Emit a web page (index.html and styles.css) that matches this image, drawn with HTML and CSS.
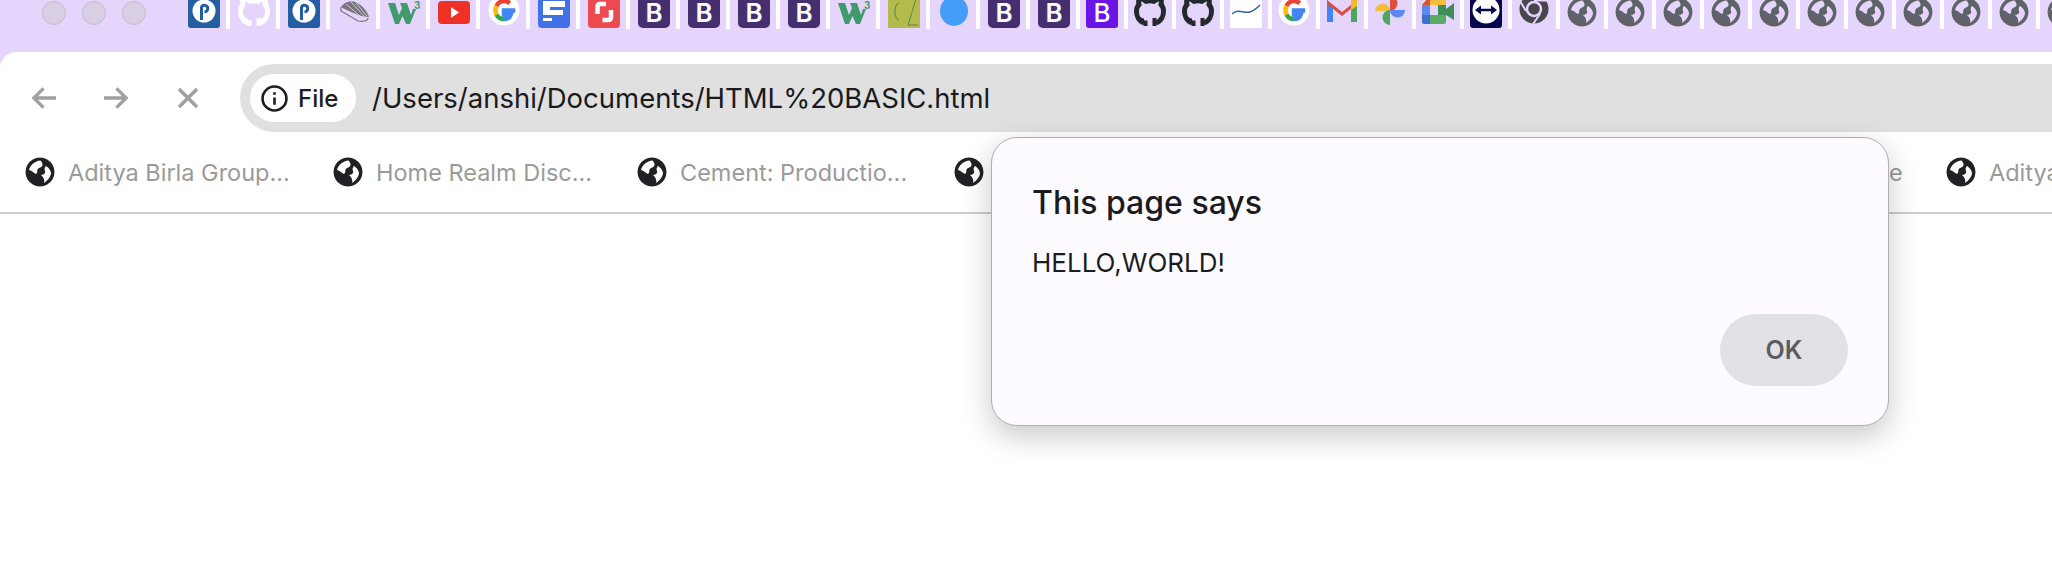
FILE: index.html
```html
<!DOCTYPE html>
<html lang="en">
<head>
<meta charset="utf-8">
<title>HTML BASIC</title>
<link rel="stylesheet" href="styles.css">
</head>
<body>
<svg class="defs" width="0" height="0" aria-hidden="true">
  <defs>
    <symbol id="i-p" viewBox="0 0 32 32">
      <rect width="32" height="32" rx="3" fill="#235ea3"/>
      <circle cx="16" cy="15" r="11.5" fill="#fff"/>
      <path d="M13.5 24V11.5a3.2 3.2 0 1 1 3 4.2" fill="none" stroke="#235ea3" stroke-width="3"/>
    </symbol>
    <symbol id="i-gh" viewBox="0 0 32 32">
      <path d="M10 27C4.5 25 2.5 19.5 2.5 15.5C2.5 12 3.8 9.8 5 8.5C4.5 6.5 4.7 3.8 5.5 2.5C7.5 2.5 10 3.8 12 5.3Q16 4.3 20 5.3C22 3.8 24.5 2.5 26.5 2.5C27.3 3.8 27.5 6.5 27 8.5C28.2 9.8 29.5 12 29.5 15.5C29.5 19.5 27.5 25 22 27" fill="none" stroke="currentColor" stroke-width="5"/>
      <path d="M11.5 30V24.5M20.5 30V22" stroke="currentColor" stroke-width="4"/>
      <path d="M3 20C5 22 8 24 10 24" fill="none" stroke="currentColor" stroke-width="3"/>
    </symbol>
    <symbol id="i-sushi" viewBox="0 0 32 32">
      <path d="M3 11C6 6 14 4 19 7C25 10 29 15 31 21C24 21 14 17 3 11Z" fill="#77777b"/>
      <path d="M8 8L22 20M13 6L26 20M18 7L29 20" stroke="#e5d4fb" stroke-width=".8"/>
      <path d="M3 11V15L20 25C24 26 30 25 30 22" fill="none" stroke="#77777b" stroke-width="1.2"/>
    </symbol>
    <symbol id="i-w3" viewBox="0 0 32 32">
      <path d="M0 7H7L11 19L14 12L12 7H19L23 19L25 13L28 13L22 28H18L14.5 20L11 28H7Z" fill="#419a6c"/>
      <text x="26" y="13" class="w3-num">3</text>
    </symbol>
    <symbol id="i-yt" viewBox="0 0 32 32">
      <rect y="5" width="32" height="23" rx="4" fill="#ee3124"/>
      <path d="M13 11L21 16.5L13 22Z" fill="#fff"/>
    </symbol>
    <symbol id="i-g" viewBox="0 0 32 32">
      <circle cx="16" cy="14" r="15.5" fill="#fff"/>
      <g transform="translate(16 14) scale(1.12) translate(-16.5 -14)" fill="none" stroke-width="4">
        <path d="M26.5 14.5H16.5V18H22.5C21.7 20.5 19.3 22 16.5 22" stroke="#4285f4"/>
        <path d="M16.5 22C13.5 22 11 20.5 9.8 18" stroke="#34a853"/>
        <path d="M9.8 18C8.8 16 8.8 12.5 9.8 10.5" stroke="#fbbc05"/>
        <path d="M9.8 10.5C11 8 13.5 6 16.5 6C18.5 6 20.3 6.8 21.7 8" stroke="#ea4335"/>
      </g>
    </symbol>
    <symbol id="i-f" viewBox="0 0 32 32">
      <rect width="32" height="32" rx="4" fill="#4270e6"/>
      <path d="M5 5H27V11H12V14H25V19H5ZM5 22H14V25H5Z" fill="#fff"/>
    </symbol>
    <symbol id="i-red" viewBox="0 0 32 32">
      <rect width="32" height="32" rx="4" fill="#ec4a4e"/>
      <path d="M9.5 18V11Q9.5 8 12.5 8H18M23 14V21Q23 24 20 24H14.5" fill="none" stroke="#fff" stroke-width="4.5"/>
    </symbol>
    <symbol id="i-b" viewBox="0 0 32 32">
      <rect width="32" height="32" rx="5" fill="#452f6e"/>
      <text x="16" y="25.5" class="b-letter">B</text>
    </symbol>
    <symbol id="i-b2" viewBox="0 0 32 32">
      <rect width="32" height="32" rx="3" fill="#6a14e6"/>
      <text x="16" y="25.5" class="b-letter b-thin">B</text>
    </symbol>
    <symbol id="i-cz" viewBox="0 0 32 32">
      <rect width="32" height="32" fill="#b4bb4c"/>
      <path d="M11 7C6 8 5 22 11 24M21 3H28L20 29H30" fill="none" stroke="#4c8a56" stroke-width="1"/>
    </symbol>
    <symbol id="i-line" viewBox="0 0 32 32">
      <rect width="32" height="32" fill="#fff"/>
      <path d="M2 18C8 12 14 18 20 16C24 15 27 12 30 9" fill="none" stroke="#2c64a8" stroke-width="1.5"/>
    </symbol>
    <symbol id="i-gmail" viewBox="0 0 32 32">
      <path d="M1 4V26H7V10Z" fill="#4285f4"/>
      <path d="M31 4V26H25V10Z" fill="#4fa55e"/>
      <path d="M1 4L16 16L31 4L31 8L16 20L1 8Z" fill="#dd4e3c"/>
      <path d="M25 4H31V10L25 14Z" fill="#f4b930"/>
    </symbol>
    <symbol id="i-photos" viewBox="0 0 32 32">
      <path d="M1 15A7.5 7.5 0 0 1 16 15Z" fill="#f4bd3b"/>
      <path d="M16 0A7.5 7.5 0 0 1 16 15Z" fill="#dd4e3c"/>
      <path d="M31 14A7.5 7.5 0 0 1 16 14Z" fill="#5a8af0"/>
      <path d="M16 29A7.5 7.5 0 0 1 16 14Z" fill="#4fa55e"/>
    </symbol>
    <symbol id="i-meet" viewBox="0 0 32 32">
      <path d="M0 9L8 0H21Q24 0 24 3V9Z" fill="#f4bd3b"/>
      <path d="M0 9L8 0V9Z" fill="#dd4e3c"/>
      <path d="M0 9H8V19H0Z" fill="#5a8af0"/>
      <path d="M0 19H8V28H2Q0 28 0 26Z" fill="#3f6fce"/>
      <path d="M8 19H24V26Q24 28 22 28H8Z" fill="#59ab66"/>
      <path d="M16 19V9H24V13L32 7V24L24 19Z" fill="#3d8f58"/>
      <rect x="8" y="9" width="8" height="10" fill="#e5d4fb"/>
    </symbol>
    <symbol id="i-tv" viewBox="0 0 32 32">
      <rect width="32" height="32" rx="3" fill="#05084f"/>
      <circle cx="16" cy="14" r="13.5" fill="#fff"/>
      <path d="M5 14L11 9.5V12.8H21V9.5L27 14L21 18.5V15.2H11V18.5Z" fill="#05084f"/>
    </symbol>
    <symbol id="i-chrome" viewBox="0 0 32 32">
      <circle cx="16" cy="13" r="14.5" fill="#47474b"/>
      <circle cx="16" cy="13" r="7" fill="#47474b" stroke="#e5d4fb" stroke-width="2.5"/>
      <path d="M16 4.5H29M8 15L2 5M22 18L15 28" stroke="#e5d4fb" stroke-width="2"/>
    </symbol>
    <symbol id="i-globe" viewBox="0 0 30 30">
      <path fill-rule="evenodd" d="M15 .5a14.5 14.5 0 1 0 .01 0ZM15.5 3.5C10 4 5 8 4 13C7 13.5 8.5 16 11 17C13.5 15.5 11 12.5 14 11C17 10 19.5 8 15.5 3.5ZM21 9C24.5 11 26 14 26 17C25 21 22 24 19 26C20 22 18 20 16 18C18 18 21 17 20 14C19 12 20 10 21 9Z"/>
    </symbol>
  </defs>
</svg>

<header class="chrome">
  <div class="strip">
    <div class="lights">
      <span class="light"></span>
      <span class="light"></span>
      <span class="light"></span>
    </div>
    <div class="tabs">
      <div class="tab"><svg class="fav"><use href="#i-p"/></svg></div>
      <div class="tab tone-white"><svg class="fav"><use href="#i-gh"/></svg></div>
      <div class="tab"><svg class="fav"><use href="#i-p"/></svg></div>
      <div class="tab"><svg class="fav"><use href="#i-sushi"/></svg></div>
      <div class="tab"><svg class="fav"><use href="#i-w3"/></svg></div>
      <div class="tab"><svg class="fav"><use href="#i-yt"/></svg></div>
      <div class="tab"><svg class="fav"><use href="#i-g"/></svg></div>
      <div class="tab"><svg class="fav"><use href="#i-f"/></svg></div>
      <div class="tab"><svg class="fav"><use href="#i-red"/></svg></div>
      <div class="tab"><svg class="fav"><use href="#i-b"/></svg></div>
      <div class="tab"><svg class="fav"><use href="#i-b"/></svg></div>
      <div class="tab"><svg class="fav"><use href="#i-b"/></svg></div>
      <div class="tab"><svg class="fav"><use href="#i-b"/></svg></div>
      <div class="tab"><svg class="fav"><use href="#i-w3"/></svg></div>
      <div class="tab"><svg class="fav"><use href="#i-cz"/></svg></div>
      <div class="tab"><span class="dot"></span></div>
      <div class="tab"><svg class="fav"><use href="#i-b"/></svg></div>
      <div class="tab tab-last-wide"><svg class="fav"><use href="#i-b"/></svg></div>
      <div class="tab tab-n"><svg class="fav"><use href="#i-b2"/></svg></div>
      <div class="tab tab-n tone-dark"><svg class="fav"><use href="#i-gh"/></svg></div>
      <div class="tab tab-n tone-dark"><svg class="fav"><use href="#i-gh"/></svg></div>
      <div class="tab tab-n"><svg class="fav"><use href="#i-line"/></svg></div>
      <div class="tab tab-n"><svg class="fav"><use href="#i-g"/></svg></div>
      <div class="tab tab-n"><svg class="fav"><use href="#i-gmail"/></svg></div>
      <div class="tab tab-n"><svg class="fav"><use href="#i-photos"/></svg></div>
      <div class="tab tab-n"><svg class="fav"><use href="#i-meet"/></svg></div>
      <div class="tab tab-n"><svg class="fav"><use href="#i-tv"/></svg></div>
      <div class="tab tab-n"><svg class="fav"><use href="#i-chrome"/></svg></div>
      <div class="tab tab-n"><svg class="fav tone-grey"><use href="#i-globe"/></svg></div>
      <div class="tab tab-n"><svg class="fav tone-grey"><use href="#i-globe"/></svg></div>
      <div class="tab tab-n"><svg class="fav tone-grey"><use href="#i-globe"/></svg></div>
      <div class="tab tab-n"><svg class="fav tone-grey"><use href="#i-globe"/></svg></div>
      <div class="tab tab-n"><svg class="fav tone-grey"><use href="#i-globe"/></svg></div>
      <div class="tab tab-n"><svg class="fav tone-grey"><use href="#i-globe"/></svg></div>
      <div class="tab tab-n"><svg class="fav tone-grey"><use href="#i-globe"/></svg></div>
      <div class="tab tab-n"><svg class="fav tone-grey"><use href="#i-globe"/></svg></div>
      <div class="tab tab-n"><svg class="fav tone-grey"><use href="#i-globe"/></svg></div>
      <div class="tab tab-n"><svg class="fav tone-grey"><use href="#i-globe"/></svg></div>
      <div class="tab tab-n"><svg class="fav tone-grey"><use href="#i-globe"/></svg></div>
    </div>
  </div>

  <div class="toolbar">
    <svg class="nav" viewBox="0 0 26 24"><path d="M25 12H3M12 2L2 12L12 22"/></svg>
    <svg class="nav" viewBox="0 0 26 24"><path d="M1 12H23M14 2L24 12L14 22"/></svg>
    <svg class="nav nav-x" viewBox="0 0 22 22"><path d="M2 2L20 20M20 2L2 20"/></svg>
    <div class="omnibox">
      <div class="chip">
        <svg class="info" viewBox="0 0 26 26"><circle cx="13" cy="13" r="11.5"/><path d="M13 12V19M13 7V9.5"/></svg>
        <span>File</span>
      </div>
      <span class="url">/Users/anshi/Documents/HTML%20BASIC.html</span>
    </div>
  </div>

  <nav class="bookmarks">
    <div class="bm bm-a"><svg class="bm-globe"><use href="#i-globe"/></svg><span>Aditya Birla Group...</span></div>
    <div class="bm bm-b"><svg class="bm-globe"><use href="#i-globe"/></svg><span>Home Realm Disc...</span></div>
    <div class="bm bm-c"><svg class="bm-globe"><use href="#i-globe"/></svg><span>Cement: Productio...</span></div>
    <div class="bm bm-d"><svg class="bm-globe"><use href="#i-globe"/></svg></div>
    <div class="bm bm-e"><span>e</span></div>
    <div class="bm"><svg class="bm-globe"><use href="#i-globe"/></svg><span>Aditya</span></div>
  </nav>
</header>

<main class="page"></main>

<div class="dialog" role="alertdialog">
  <h1 class="dialog-title">This page says</h1>
  <p class="dialog-msg">HELLO,WORLD!</p>
  <div class="dialog-actions"><button class="ok" type="button">OK</button></div>
</div>
</body>
</html>
```
FILE: styles.css
```css
* { box-sizing: border-box; }
html, body { margin: 0; padding: 0; height: 100%; overflow: hidden; background: #fff; }
body { font-family: Inter, "Liberation Sans", sans-serif; color: #1f1f24; }
.defs { position: absolute; }

.chrome { background: #e5d4fb; }
.strip { display: flex; align-items: flex-start; height: 52px; overflow: hidden; }
.lights { display: flex; gap: 16px; padding: 1px 0 0 42px; margin-right: 42px; flex: none; }
.light { width: 24px; height: 24px; border-radius: 50%; background: #d9cfe4; border: 1px solid #c5bccd; }
.tabs { display: flex; height: 29px; flex: none; }
.tab { flex: none; display: flex; width: 50px; height: 29px; padding-right: 14px; }
.tab::after { content: ""; flex: none; width: 4px; height: 29px; background: #fff; margin-left: 6px; margin-right: -10px; }
.tab-last-wide { width: 48px; }
.tab-n { width: 48px; padding-right: 12px; }
.fav { flex: none; width: 32px; height: 32px; margin-top: -4px; }
.tone-white { color: #fff; }
.tone-dark { color: #24292e; }
.tone-grey { width: 30px; height: 30px; margin: -3px 1px 0; fill: #5f6368; }
.dot { flex: none; width: 28px; height: 30px; margin: -4px 2px 0; border-radius: 50%; background: #469df8; }
.w3-num { font: 700 10px Inter, sans-serif; fill: #419a6c; }
.b-letter { font: 600 26px Inter, sans-serif; fill: #fff; text-anchor: middle; }
.b-thin { font-weight: 500; }

.toolbar { display: flex; align-items: center; height: 80px; padding: 12px 0 0 32px; background: #fff; border-top-left-radius: 16px; }
.nav { flex: none; width: 25px; height: 24px; margin-right: 46px; fill: none; stroke: #a0a0a2; stroke-width: 3.5; }
.nav-x { width: 22px; height: 22px; margin-left: 3px; margin-right: 41px; }
.omnibox { flex: 1; height: 68px; display: flex; align-items: center; padding-left: 10px; background: #e0e0e0; border-radius: 34px 0 0 34px; }
.chip { display: flex; align-items: center; gap: 10px; width: 106px; height: 48px; padding-left: 11px; background: #fff; border-radius: 24px; font-size: 24px; font-weight: 500; color: #1d1d22; }
.info { flex: none; width: 27px; height: 27px; fill: none; stroke: #1d1d22; stroke-width: 2.5; }
.url { margin-left: 16px; font-size: 27.5px; color: #1a1a1a; }

.bookmarks { display: flex; align-items: center; height: 82px; padding-left: 25px; background: #fff; border-bottom: 2px solid #ccc; overflow: hidden; white-space: nowrap; font-size: 23.5px; color: #9a9a9a; }
.bm { flex: none; display: flex; align-items: center; gap: 13px; }
.bm-a { width: 308px; }
.bm-b { width: 304px; }
.bm-c { width: 317px; }
.bm-d { width: 935px; }
.bm-e { width: 57px; }
.bm-globe { flex: none; width: 30px; height: 30px; fill: #202124; }

.page { height: 350px; background: #fff; }

.dialog { position: absolute; left: 991px; top: 137px; width: 898px; height: 289px; display: flex; flex-direction: column; padding: 0 40px 39px; background: #fdfbff; border: 1px solid #b0aeb2; border-radius: 26px; box-shadow: 0 10px 30px rgba(0, 0, 0, .22); }
.dialog-title { margin: 45px 0 0; font-size: 32px; font-weight: 500; line-height: 40px; color: #1b1b1f; }
.dialog-msg { margin: 25px 0 0; font-size: 26px; line-height: 30px; color: #1b1b1f; }
.dialog-actions { margin-top: auto; display: flex; justify-content: flex-end; }
.ok { width: 128px; height: 72px; border: 0; border-radius: 36px; background: #e2e1e6; color: #5b5c60; font: 600 25px Inter, sans-serif; }
```
